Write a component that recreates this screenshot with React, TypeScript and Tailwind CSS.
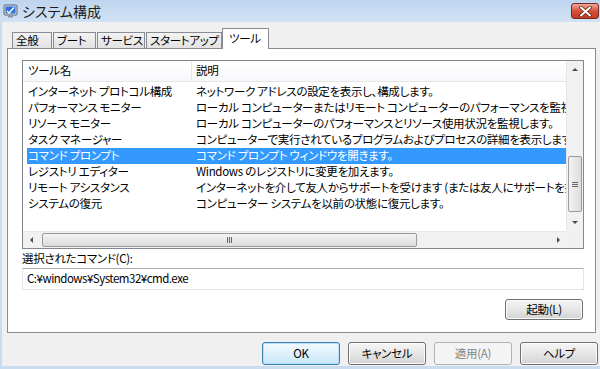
const font = "font-['Noto_Sans_CJK_JP','Noto_Sans',sans-serif] [font-feature-settings:'palt']";

const tools = [
  ["インターネット プロトコル構成", "ネットワーク アドレスの設定を表示し、構成します。"],
  ["パフォーマンス モニター", "ローカル コンピューターまたはリモート コンピューターのパフォーマンスを監視します。"],
  ["リソース モニター", "ローカル コンピューターのパフォーマンスとリソース使用状況を監視します。"],
  ["タスク マネージャー", "コンピューターで実行されているプログラムおよびプロセスの詳細を表示します。"],
  ["コマンド プロンプト", "コマンド プロンプト ウィンドウを開きます。"],
  ["レジストリ エディター", "Windows のレジストリに変更を加えます。"],
  ["リモート アシスタンス", "インターネットを介して友人からサポートを受けます (または友人にサポートを提供します)。"],
  ["システムの復元", "コンピューター システムを以前の状態に復元します。"],
];

const tabs: [string, string][] = [
  ["全般", "w-[40px]"],
  ["ブート", "w-[43px]"],
  ["サービス", "w-[48px]"],
  ["スタートアップ", "w-[76px]"],
  ["ツール", "w-[47px]"],
];

const Arrow = ({ dir }: { dir: "up" | "down" | "left" | "right" }) => {
  const pts = {
    up: "1,5 4,2 7,5",
    down: "1,2 4,5 7,2",
    left: "5,1 2,4 5,7",
    right: "3,1 6,4 3,7",
  }[dir];
  return (
    <svg width="8" height="8" viewBox="0 0 8 8">
      <polygon points={pts} fill="#4d4d4d" />
    </svg>
  );
};

const Button = ({ label, kind }: { label: string; kind?: "default" | "disabled" }) => {
  const look =
    kind === "default"
      ? "border-[#3c7fb1] bg-gradient-to-b from-[#f2fafe] via-[#dff1fc] to-[#c6e6fa] shadow-[inset_0_0_0_1px_#b6e0fb]"
      : kind === "disabled"
      ? "border-[#adb2b5] bg-[#f4f4f4] text-[#838383]"
      : "border-[#707070] bg-gradient-to-b from-[#f6f6f6] via-[#e6e6e6] to-[#d3d3d3] shadow-[inset_0_0_0_1px_#fcfcfc]";
  return (
    <div className={`flex h-full w-full items-center justify-center rounded-[3px] border text-[11.5px] tracking-[-0.3px] ${look}`}>
      {label}
    </div>
  );
};

const AppIcon = () => (
  <svg width="15" height="15" viewBox="0 0 15 15">
    <rect x="1" y="1" width="13" height="10" rx="1" fill="#d8dde6" stroke="#5b6478" />
    <rect x="2.5" y="2.5" width="10" height="7" fill="#2f6fd6" />
    <path d="M4 7 L6 9 L11 3.5" stroke="#ffffff" strokeWidth="1.4" fill="none" />
    <rect x="5" y="11.5" width="5" height="2" fill="#8a92a3" />
  </svg>
);

export default function App() {
  return (
    <div className={`flex h-[369px] w-[600px] flex-col bg-[#cadcf1] text-black ${font}`}>
      {/* title bar */}
      <div className="flex h-[22px] shrink-0 items-center bg-gradient-to-b from-[#bed4ee] to-[#d2e2f4] pl-[3px] pr-[1px]">
        <AppIcon />
        <span className="ml-[4px] text-[14px] leading-none text-[#1e1e1e]">システム構成</span>
        <div className="ml-auto flex h-[16px] w-[28px] items-center justify-center rounded-[3px] border border-[#7a2b20] bg-gradient-to-b from-[#e9a99b] via-[#d5513a] to-[#c23a22]">
          <svg width="13" height="11" viewBox="0 0 13 11">
            <path d="M2 1.5 L11 9.5 M11 1.5 L2 9.5" stroke="#6b1f14" strokeWidth="3.6" strokeLinecap="round" />
            <path d="M2 1.5 L11 9.5 M11 1.5 L2 9.5" stroke="#ffffff" strokeWidth="2" strokeLinecap="round" />
          </svg>
        </div>
      </div>

      {/* client area */}
      <div className="mb-[3px] ml-[2px] flex flex-1 flex-col bg-[#f0f0f0] text-[11.5px] tracking-[-0.3px]">
        {/* tabs */}
        <div className="relative z-10 -mb-px mt-[7px] flex h-[20px] items-end pl-[10px]">
          {tabs.map(([t, w]) => {
            const active = t === "ツール";
            return active ? (
              <div
                key={t}
                className={`-ml-px flex h-[21px] items-start border border-b-0 border-[#898c95] bg-white pl-[6px] pt-[2px] leading-[14px] ${w}`}
              >
                {t}
              </div>
            ) : (
              <div
                key={t}
                className={`mb-px mr-px flex h-[16px] items-center border border-b-0 border-[#898c95] bg-gradient-to-b from-[#f3f3f3] to-[#e2e2e2] pl-[3px] leading-none whitespace-nowrap ${w}`}
              >
                {t}
              </div>
            );
          })}
        </div>

        {/* panel */}
        <div className="ml-[5px] flex h-[285px] w-[589px] flex-col border border-[#898c95] bg-white pl-[14px] pr-[12px] pt-[11px]">
          {/* list view */}
          <div className="grid h-[189px] w-[562px] grid-cols-[1fr_17px] grid-rows-[1fr_17px] border border-[#828790]">
            <div className="overflow-hidden">
              <div className="flex h-[21px] items-center border-b border-[#e5e5e5] bg-gradient-to-b from-white to-[#f7f8fa]">
                <div className="flex h-full w-[169px] items-center border-r border-[#e5e5e5] pl-[5px]">ツール名</div>
                <div className="pl-[4px]">説明</div>
              </div>
              <div className="pt-[2px] pl-[4px]">
                {tools.map(([name, desc], i) => {
                  const sel = i === 4;
                  return (
                    <div
                      key={name}
                      className={`flex h-[16px] items-center whitespace-nowrap leading-none ${sel ? "bg-[#3399ff] text-white" : ""}`}
                    >
                      <div className="w-[165px] shrink-0 pl-[1px]">{name}</div>
                      <div className="pl-[4px]">{desc}</div>
                    </div>
                  );
                })}
              </div>
            </div>

            {/* vertical scrollbar */}
            <div className="flex flex-col border-l border-[#e6e6e6] bg-[#f1f1f1]">
              <div className="flex h-[17px] items-center justify-center">
                <Arrow dir="up" />
              </div>
              <div className="flex flex-1 flex-col justify-end pb-[2px]">
                <div className="mx-px flex h-[56px] items-center justify-center rounded-[2px] border border-[#9b9b9b] bg-gradient-to-r from-[#f4f4f4] to-[#dcdcdc]">
                  <div className="flex flex-col gap-[1px]">
                    <div className="h-px w-[6px] bg-[#666]" />
                    <div className="h-px w-[6px] bg-[#666]" />
                    <div className="h-px w-[6px] bg-[#666]" />
                  </div>
                </div>
              </div>
              <div className="flex h-[17px] items-center justify-center">
                <Arrow dir="down" />
              </div>
            </div>

            {/* horizontal scrollbar */}
            <div className="flex border-t border-[#e6e6e6] bg-[#f1f1f1]">
              <div className="flex w-[17px] items-center justify-center">
                <Arrow dir="left" />
              </div>
              <div className="flex flex-1 items-stretch py-px pl-[2px]">
                <div className="flex w-[375px] items-center justify-center rounded-[2px] border border-[#9b9b9b] bg-gradient-to-b from-[#f4f4f4] to-[#dcdcdc]">
                  <div className="flex gap-[1px]">
                    <div className="h-[6px] w-px bg-[#666]" />
                    <div className="h-[6px] w-px bg-[#666]" />
                    <div className="h-[6px] w-px bg-[#666]" />
                  </div>
                </div>
              </div>
              <div className="flex w-[17px] items-center justify-center">
                <Arrow dir="right" />
              </div>
            </div>
            <div className="bg-[#f0f0f0]" />
          </div>

          <div className="flex h-[19px] items-center">選択されたコマンド(C):</div>
          <div className="flex h-[22px] w-[562px] items-center border border-[#e2e3ea] border-t-[#abadb3] bg-white pl-[4px] tracking-[-0.5px]">
            C:¥windows¥System32¥cmd.exe
          </div>
          <div className="mt-[9px] flex justify-end">
            <div className="h-[21px] w-[78px]">
              <Button label="起動(L)" />
            </div>
          </div>
        </div>

        {/* dialog buttons */}
        <div className="mt-[9px] flex justify-end gap-[8px] pr-[2px]">
          <div className="h-[23px] w-[78px]">
            <Button label="OK" kind="default" />
          </div>
          <div className="h-[23px] w-[78px]">
            <Button label="キャンセル" />
          </div>
          <div className="h-[23px] w-[78px]">
            <Button label="適用(A)" kind="disabled" />
          </div>
          <div className="h-[23px] w-[78px]">
            <Button label="ヘルプ" />
          </div>
        </div>
      </div>
    </div>
  );
}
